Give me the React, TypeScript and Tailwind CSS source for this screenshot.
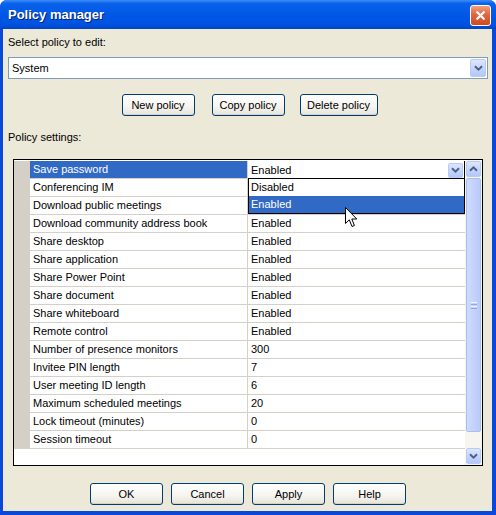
import React from 'react';

// Values under the open dropdown are hidden, so they are left blank.
const rows: [string, string][] = [
  ['Save password', 'Enabled'],
  ['Conferencing IM', ''],
  ['Download public meetings', ''],
  ['Download community address book', 'Enabled'],
  ['Share desktop', 'Enabled'],
  ['Share application', 'Enabled'],
  ['Share Power Point', 'Enabled'],
  ['Share document', 'Enabled'],
  ['Share whiteboard', 'Enabled'],
  ['Remote control', 'Enabled'],
  ['Number of presence monitors', '300'],
  ['Invitee PIN length', '7'],
  ['User meeting ID length', '6'],
  ['Maximum scheduled meetings', '20'],
  ['Lock timeout (minutes)', '0'],
  ['Session timeout', '0'],
];

const Chevron: React.FC<{ up?: boolean }> = ({ up }) => (
  <svg width="9" height="6" viewBox="0 0 9 6" className={up ? 'rotate-180' : ''}>
    <path d="M1 1.2 L4.5 4.6 L8 1.2" fill="none" stroke="#4D6185" strokeWidth="2" />
  </svg>
);

/** XP-style blue arrow button used by combos and scrollbars. */
const ArrowButton: React.FC<{ up?: boolean; className?: string }> = ({ up, className = '' }) => (
  <div
    className={`flex items-center justify-center rounded-[2px] border border-[#B9CBF5] bg-[linear-gradient(180deg,#DCE6FE_0%,#C6D5FC_50%,#B4C7F8_100%)] ${className}`}
  >
    <Chevron up={up} />
  </div>
);

const Button: React.FC<{ label: string; w?: string }> = ({ label, w = 'w-[73px]' }) => (
  <button
    className={`${w} h-[22px] rounded-[3px] border border-[#003C74] bg-[linear-gradient(180deg,#FFFFFF_0%,#F6F5F0_55%,#E6E4DA_100%)] text-[11px] leading-none text-black shadow-[inset_0_-1px_0_#D6D0C5]`}
  >
    {label}
  </button>
);

const Cursor: React.FC = () => (
  <svg width="13" height="21" viewBox="0 0 13 21" className="absolute left-[96px] top-[28px]">
    <path
      d="M0.5 0.5 L0.5 16.5 L4.3 12.8 L7 19.5 L9.4 18.5 L6.8 12 L11.8 12 Z"
      fill="#FFFFFF"
      stroke="#000000"
      strokeWidth="1"
      strokeLinejoin="miter"
    />
  </svg>
);

export default function App() {
  return (
    <div className="flex h-[515px] w-[496px] flex-col overflow-hidden rounded-t-[7px] bg-[#0A48DB] font-['Liberation_Sans',Arial,sans-serif] text-[11px] text-black">
      {/* title bar */}
      <div className="flex h-[29px] shrink-0 items-center bg-[linear-gradient(180deg,#3D8FF8_0%,#0A61EA_12%,#0058E6_50%,#0053E1_85%,#0443C6_100%)] pl-[8px] pr-[5px]">
        <span className="font-['Liberation_Sans',Arial,sans-serif] text-[13px] font-bold text-white [text-shadow:1px_1px_0_#0A1E6A]">
          Policy manager
        </span>
        <div className="ml-auto mt-[2px] flex h-[21px] w-[21px] items-center justify-center rounded-[3px] border border-white bg-[linear-gradient(180deg,#F0A083_0%,#E2643E_45%,#CF4A22_100%)]">
          <svg width="11" height="11" viewBox="0 0 11 11">
            <path d="M1.5 1.5 L9.5 9.5 M9.5 1.5 L1.5 9.5" stroke="#FFFFFF" strokeWidth="2.2" />
          </svg>
        </div>
      </div>

      {/* dialog body */}
      <div className="mb-[4px] ml-[3px] mr-[4px] flex flex-1 flex-col bg-[#ECE9D8] pl-[5px] pr-[4px]">
        <div className="mt-[6px] h-[14px] leading-[14px]">Select policy to edit:</div>

        <div className="mt-[8px] flex h-[22px] items-center border border-[#7F9DB9] bg-white pl-[3px] pr-[1px]">
          <span className="flex-1">System</span>
          <ArrowButton className="h-[18px] w-[16px]" />
        </div>

        <div className="mt-[15px] flex justify-center pl-[3px]">
          <Button label="New policy" />
          <div className="w-[17px]" />
          <Button label="Copy policy" />
          <div className="w-[15px]" />
          <Button label="Delete policy" w="w-[78px]" />
        </div>

        <div className="mt-[14px] h-[14px] leading-[14px]">Policy settings:</div>

        {/* property grid */}
        <div className="relative ml-[5px] mt-[15px] flex h-[307px] w-[470px] border border-black bg-white">
          <div className="flex flex-1 flex-col pt-px">
            {rows.map(([name, value], i) => {
              const selected = i === 0;
              return (
                <div key={name} className="flex h-[18px]">
                  <div className="w-[16px] bg-[#D4D0C8]" />
                  <div
                    className={`flex w-[218px] items-center border-b border-r border-[#D4D0C8] pl-[3px] ${
                      selected ? 'bg-[#316AC5] text-white' : ''
                    }`}
                  >
                    {name}
                  </div>
                  {selected ? (
                    <div className="relative flex flex-1 items-center border-r border-black pl-[3px] pr-[1px]">
                      <span className="flex-1">{value}</span>
                      <ArrowButton className="h-[15px] w-[15px]" />
                      {/* open dropdown list */}
                      <div className="absolute left-0 right-[-1px] top-[17px] z-10 flex flex-col border border-black bg-white">
                        <div className="flex h-[17px] items-center pl-[2px]">Disabled</div>
                        <div className="flex h-[17px] items-center bg-[#316AC5] pl-[2px] text-white">Enabled</div>
                        <Cursor />
                      </div>
                    </div>
                  ) : (
                    <div className="flex flex-1 items-center border-b border-[#D4D0C8] pl-[3px]">{value}</div>
                  )}
                </div>
              );
            })}
          </div>

          {/* vertical scrollbar */}
          <div className="flex w-[17px] flex-col bg-[#F6F5EF] px-[1px] py-[1px]">
            <ArrowButton up className="h-[16px]" />
            <div className="mt-[1px] flex h-[254px] items-center justify-center rounded-[2px] border border-[#A8BEF2] bg-[linear-gradient(90deg,#D0DCFD_0%,#C4D3FC_50%,#B8CAF9_100%)]">
              <div className="flex flex-col gap-[1px]">
                <div className="h-px w-[6px] bg-[#EEF3FE]" />
                <div className="h-px w-[6px] bg-[#8CA6E8]" />
                <div className="h-px w-[6px] bg-[#EEF3FE]" />
                <div className="h-px w-[6px] bg-[#8CA6E8]" />
              </div>
            </div>
            <div className="flex-1" />
            <ArrowButton className="h-[16px]" />
          </div>
        </div>

        <div className="mt-[17px] flex justify-center gap-[8px]">
          <Button label="OK" />
          <Button label="Cancel" />
          <Button label="Apply" />
          <Button label="Help" />
        </div>
      </div>
    </div>
  );
}
